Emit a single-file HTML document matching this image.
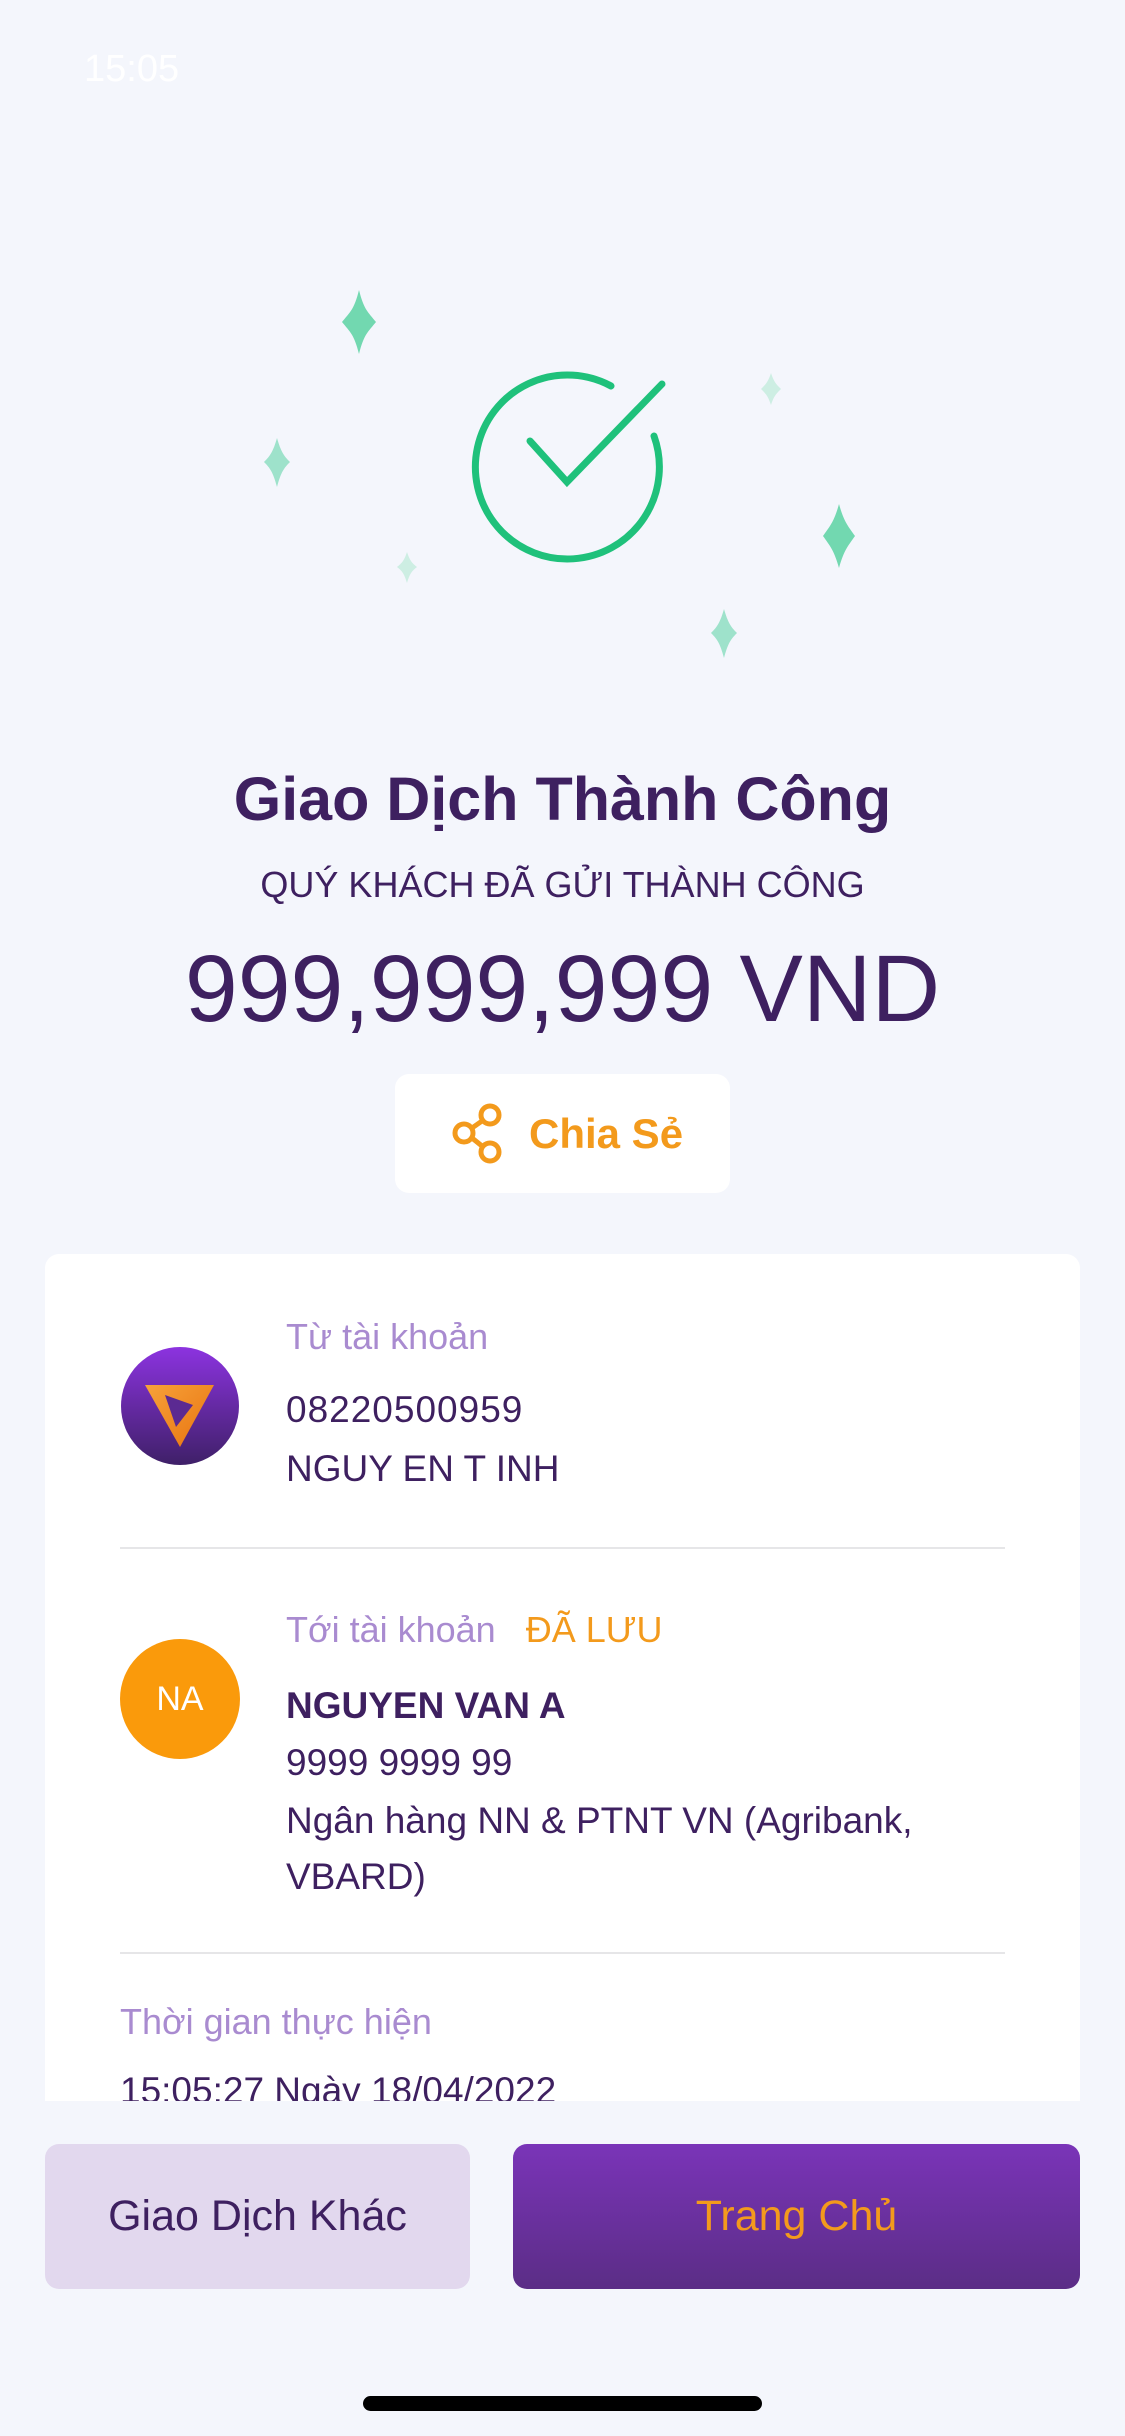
<!DOCTYPE html>
<html><head><meta charset="utf-8"><style>
*{margin:0;padding:0;box-sizing:border-box}
body{width:1125px;height:2436px;background:#f4f6fc;font-family:"Liberation Sans",sans-serif;position:relative;overflow:hidden}
.t{position:absolute;white-space:nowrap;line-height:1}
.c{left:0;width:1125px;text-align:center}
</style></head><body>
<div class="t" style="left:84px;top:50px;font-size:38px;color:#fff">15:05</div>
<svg style="position:absolute;left:0;top:0" width="1125" height="720">
<g fill="#72d8b0">
<path d="M359 290 C364 310 368 312 376 322 C368 332 364 334 359 354 C354 334 350 332 342 322 C350 312 354 310 359 290Z"/>
<path d="M839 504 C844 522 848 526 855 536 C848 546 844 550 839 568 C834 550 830 546 823 536 C830 526 834 522 839 504Z"/>
</g>
<g fill="#9ee2cb">
<path d="M277 438 C281 452 284 456 290 462 C284 468 281 472 277 487 C273 472 270 468 264 462 C270 456 273 452 277 438Z"/>
<path d="M724 609 C728 623 731 627 737 633 C731 639 728 643 724 658 C720 643 717 639 711 633 C717 627 720 623 724 609Z"/>
</g>
<g fill="#cdeee3">
<path d="M407 552 C410 561 412 563 417 567 C412 571 410 573 407 583 C404 573 402 571 397 567 C402 563 404 561 407 552Z"/>
<path d="M771 373 C774 382 776 384 781 389 C776 394 774 396 771 405 C768 396 766 394 761 389 C766 384 768 382 771 373Z"/>
</g>
<g fill="none" stroke="#1fc17b" stroke-width="7" stroke-linecap="round">
<path d="M611 386 A92 92 0 1 0 654 436"/>
<path d="M530 441 L567 482 L662 384"/>
</g>
</svg>
<div class="t c" style="top:769px;font-size:61px;font-weight:bold;color:#3e2060">Giao Dịch Thành Công</div>
<div class="t c" style="top:867px;font-size:36px;color:#3e2060">QUÝ KHÁCH ĐÃ GỬI THÀNH CÔNG</div>
<div class="t c" style="top:942px;font-size:95px;color:#3e2060">999,999,999 VND</div>
<div style="position:absolute;left:395px;top:1074px;width:335px;height:119px;background:#fff;border-radius:14px"></div>
<svg style="position:absolute;left:450px;top:1100px" width="60" height="66" viewBox="0 0 60 66" fill="none" stroke="#f39a1c" stroke-width="5">
<circle cx="40" cy="15" r="9"/><circle cx="14" cy="33" r="9"/><circle cx="40" cy="52" r="9"/>
<path d="M22 28 L32 21 M22 38 L32 46"/></svg>
<div class="t" style="left:529px;top:1113px;font-size:42px;font-weight:bold;color:#f39a1c">Chia Sẻ</div>
<div style="position:absolute;left:45px;top:1254px;width:1035px;height:847px;background:#fff;border-radius:14px 14px 0 0;overflow:hidden">
<svg style="position:absolute;left:76px;top:93px" width="118" height="118" viewBox="0 0 118 118">
<defs><linearGradient id="g1" x1="0" y1="0" x2="0" y2="1"><stop offset="0" stop-color="#8c33e0"/><stop offset="1" stop-color="#3f2068"/></linearGradient>
<linearGradient id="g2" x1="0" y1="0" x2="1" y2="1"><stop offset="0" stop-color="#f7a23a"/><stop offset="1" stop-color="#e8730f"/></linearGradient></defs>
<circle cx="59" cy="59" r="59" fill="url(#g1)"/>
<path d="M24 38 L93 38 L59 100 Z" fill="url(#g2)"/>
<path d="M44 48 L72 58 L55 80 Z" fill="#5b2a92"/></svg>
<div class="t" style="left:241px;top:65px;font-size:36px;color:#a98bd0">Từ tài khoản</div>
<div class="t" style="left:241px;top:137px;font-size:37px;color:#3e2060;letter-spacing:1px">08220500959</div>
<div class="t" style="left:241px;top:196px;font-size:37px;color:#3e2060">NGUY EN T INH</div>
<div style="position:absolute;left:75px;top:293px;width:885px;height:2px;background:#e6e6e8"></div>
<div style="position:absolute;left:75px;top:385px;width:120px;height:120px;border-radius:50%;background:#fa9a0b;color:#fff;font-size:34px;line-height:120px;text-align:center">NA</div>
<div class="t" style="left:241px;top:358px;font-size:36px;color:#a98bd0">Tới tài khoản &nbsp;&nbsp;<span style="color:#f39a1c">ĐÃ LƯU</span></div>
<div class="t" style="left:241px;top:433px;font-size:37px;color:#3e2060;font-weight:bold">NGUYEN VAN A</div>
<div class="t" style="left:241px;top:490px;font-size:37px;color:#3e2060">9999 9999 99</div>
<div class="t" style="left:241px;top:548px;font-size:37px;color:#3e2060">Ngân hàng NN &amp; PTNT VN (Agribank,</div>
<div class="t" style="left:241px;top:604px;font-size:37px;color:#3e2060">VBARD)</div>
<div style="position:absolute;left:75px;top:698px;width:885px;height:2px;background:#e6e6e8"></div>
<div class="t" style="left:75px;top:750px;font-size:36px;color:#a98bd0">Thời gian thực hiện</div>
<div class="t" style="left:75px;top:818px;font-size:37px;color:#3e2060">15:05:27 Ngày 18/04/2022</div>
</div>
<div style="position:absolute;left:45px;top:2144px;width:425px;height:145px;background:#e2d8ee;border-radius:14px;color:#3e2060;font-size:43px;line-height:145px;text-align:center">Giao Dịch Khác</div>
<div style="position:absolute;left:513px;top:2144px;width:567px;height:145px;background:linear-gradient(#7a34b8,#5b2d86);border-radius:14px;color:#f39a1c;font-size:43px;line-height:145px;text-align:center">Trang Chủ</div>
<div style="position:absolute;left:363px;top:2396px;width:399px;height:15px;background:#000;border-radius:8px"></div>
</body></html>
